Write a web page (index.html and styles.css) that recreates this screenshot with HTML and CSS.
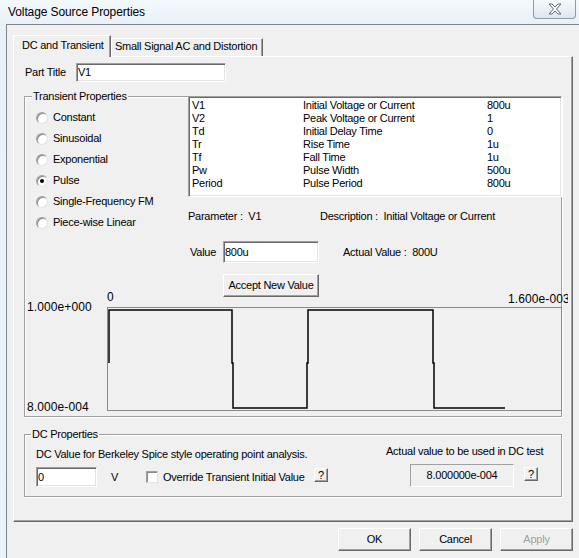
FILE: index.html
```html
<!DOCTYPE html>
<html lang="en">
<head>
    <meta charset="UTF-8">
    <meta name="viewport" content="width=device-width, initial-scale=1.0">
    <title>Voltage Source Properties</title>
    <link rel="stylesheet" href="styles.css">
</head>
<body>
    <!-- window caption -->
    <div class="titlebar">
        <span class="title">Voltage Source Properties</span>
        <div class="close-btn">
            <svg width="14" height="12" viewBox="0 0 14 12">
                <polygon points="1,1 4,1 7,4 10,1 13,1 8.5,6 13,11 10,11 7,8 4,11 1,11 5.5,6" fill="#fbfcfd" stroke="#5d6874" stroke-width="1" stroke-linejoin="round"/>
            </svg>
        </div>
    </div>

    <div class="client">
        <div class="tabs">
            <div class="tab tab-active">DC and Transient</div>
            <div class="tab tab-other">Small Signal AC and Distortion</div>
        </div>

        <div class="panel">
            <div class="part-row">
                <span class="part-label">Part Title</span>
                <div class="textbox part-input">V1</div>
            </div>

            <!-- transient group -->
            <div class="group transient">
                <span class="legend">Transient Properties</span>
                <div class="transient-top">
                    <div class="radios">
                        <div class="radio-row"><span class="radio"></span>Constant</div>
                        <div class="radio-row"><span class="radio"></span>Sinusoidal</div>
                        <div class="radio-row"><span class="radio"></span>Exponential</div>
                        <div class="radio-row"><span class="radio"><span class="dot"></span></span>Pulse</div>
                        <div class="radio-row"><span class="radio"></span>Single-Frequency FM</div>
                        <div class="radio-row"><span class="radio"></span>Piece-wise Linear</div>
                    </div>

                    <div class="params">
                        <div class="listbox">
                            <div class="list-row"><span class="c-name">V1</span><span class="c-desc">Initial Voltage or Current</span><span>800u</span></div>
                            <div class="list-row"><span class="c-name">V2</span><span class="c-desc">Peak Voltage or Current</span><span>1</span></div>
                            <div class="list-row"><span class="c-name">Td</span><span class="c-desc">Initial Delay Time</span><span>0</span></div>
                            <div class="list-row"><span class="c-name">Tr</span><span class="c-desc">Rise Time</span><span>1u</span></div>
                            <div class="list-row"><span class="c-name">Tf</span><span class="c-desc">Fall Time</span><span>1u</span></div>
                            <div class="list-row"><span class="c-name">Pw</span><span class="c-desc">Pulse Width</span><span>500u</span></div>
                            <div class="list-row"><span class="c-name">Period</span><span class="c-desc">Pulse Period</span><span>800u</span></div>
                        </div>
                        <div class="param-info">
                            <span class="info-param">Parameter :&nbsp; V1</span>
                            <span>Description :&nbsp; Initial Voltage or Current</span>
                        </div>
                        <div class="value-row">
                            <span class="value-label">Value</span>
                            <div class="textbox value-input">800u</div>
                            <span class="actual">Actual Value :&nbsp; 800U</span>
                        </div>
                        <div class="btn accept-btn">Accept New Value</div>
                    </div>
                </div>

                <!-- pulse preview -->
                <div class="graph">
                    <span class="axis ax-x0">0</span>
                    <span class="axis ax-x1">1.600e-003</span>
                    <span class="axis ax-y1">1.000e+000</span>
                    <span class="axis ax-y0">8.000e-004</span>
                    <div class="plot">
                        <svg width="453" height="102" viewBox="0 0 453 102">
                            <polyline points="1,55 1,2 124,2 124,55 125,55 125,100 199,100 199,55 200,55 200,2 325,2 325,55 326,55 326,100 397,100" fill="none" stroke="#000" stroke-width="1.5"/>
                        </svg>
                    </div>
                </div>
            </div>

            <!-- dc group -->
            <div class="group dc">
                <span class="legend">DC Properties</span>
                <div class="dc-left">
                    <div>DC Value for Berkeley Spice style operating point analysis.</div>
                    <div class="dc-row">
                        <div class="textbox dc-input">0</div>
                        <span class="unit">V</span>
                        <span class="checkbox"></span>
                        <span class="check-label">Override Transient Initial Value</span>
                        <span class="help">?</span>
                    </div>
                </div>
                <div class="dc-right">
                    <div>Actual value to be used in DC test</div>
                    <div class="dc-actual-row">
                        <div class="readout">8.000000e-004</div>
                        <span class="help help-right">?</span>
                    </div>
                </div>
            </div>
        </div>

        <div class="buttons">
            <div class="btn dlg-btn">OK</div>
            <div class="btn dlg-btn">Cancel</div>
            <div class="btn dlg-btn disabled">Apply</div>
        </div>
    </div>
</body>
</html>
```

FILE: styles.css
```css
* {
    box-sizing: border-box;
}

body {
    margin: 0;
    width: 579px;
    height: 558px;
    overflow: hidden;
    font-family: "Liberation Sans", Arial, sans-serif;
    font-size: 11px;
    line-height: 13px;
    letter-spacing: -0.25px;
    color: #000;
    background: linear-gradient(to bottom, #f3f8fb 0, #e9f1f7 24px, #e7f5f8 100%); /* glass frame */
}

.titlebar {
    display: flex;
    align-items: flex-start;
    height: 24px;
}

.title {
    padding: 5px 0 0 8px;
    font-size: 12px;
    line-height: 14px;
    letter-spacing: -0.1px;
}

.close-btn {
    margin-left: auto;
    margin-right: 3px;
    width: 43px;
    height: 19px;
    border: 1px solid #8e9aa6;
    border-top: none;
    border-radius: 0 0 4px 4px;
    background: linear-gradient(#f6f9fb, #dfe7ee);
    display: flex;
    align-items: center;
    justify-content: center;
}

.client {
    margin-left: 6px;
    height: 534px;
    border-left: 1px solid #7d868f;
    border-top: 1px solid #7d868f;
    background: #f0f0f0;
    padding: 10px 0 0 6px;
}

/* tabs */
.tabs {
    display: flex;
    height: 21px;
}

.tab {
    border-top: 1px solid #fff;
    border-left: 1px solid #fff;
    border-right: 1px solid #696969;
    box-shadow: inset -1px 0 #a0a0a0;
    white-space: nowrap;
}

.tab-active {
    position: relative;
    z-index: 1;
    width: 98px;
    height: 22px;
    margin-bottom: -1px;
    padding: 3px 0 0 8px;
    background: #f0f0f0;
}

.tab-other {
    align-self: flex-end;
    width: 152px;
    height: 18px;
    padding: 1px 0 0 3px;
}

.panel {
    width: 560px;
    height: 466px;
    border: 1px solid;
    border-color: #fff #696969 #696969 #fff;
    box-shadow: inset -1px -1px #a0a0a0;
    padding: 6px 0 0 10px;
}

.part-row {
    display: flex;
    align-items: center;
    height: 19px;
    margin-left: 1px;
}

.part-label {
    width: 51px;
}

.textbox {
    display: flex;
    align-items: center;
    padding-left: 1px;
    background: #fff;
    border: 1px solid;
    border-color: #a0a0a0 #fff #fff #a0a0a0;
    box-shadow: inset 1px 1px #696969, inset -1px -1px #e3e3e3;
}

.part-input {
    width: 150px;
    height: 19px;
}

/* group boxes */
.group {
    position: relative;
    width: 538px;
    border: 1px solid #a0a0a0;
    box-shadow: inset 1px 1px #fff, 1px 1px #fff;
}

.legend {
    position: absolute;
    top: -7px;
    left: 7px;
    padding: 0 1px;
    background: #f0f0f0;
    white-space: nowrap;
}

.transient {
    margin-top: 14px;
}

.transient-top {
    display: flex;
}

.radios {
    width: 163px;
    padding: 10px 0 0 11px;
}

.radio-row {
    display: flex;
    align-items: center;
    height: 21px;
    white-space: nowrap;
}

.radio {
    display: flex;
    align-items: center;
    justify-content: center;
    width: 12px;
    height: 12px;
    margin-right: 5px;
    border-radius: 50%;
    background: #fff;
    border: 1px solid;
    border-color: #a0a0a0 #e3e3e3 #e3e3e3 #a0a0a0;
    box-shadow: inset 1px 1px #8a8a8a;
}

.dot {
    width: 4px;
    height: 4px;
    border-radius: 50%;
    background: #000;
}

.params {
    flex: 1;
    margin-top: -1px;
    margin-right: -1px;
}

.listbox {
    height: 101px;
    padding: 2px 0 0 3px;
    background: #fff;
    border: 1px solid;
    border-color: #a0a0a0 #fff #fff #a0a0a0;
    box-shadow: inset 1px 1px #696969, inset -1px -1px #e3e3e3;
}

.list-row {
    display: flex;
    height: 13px;
    white-space: nowrap;
}

.c-name {
    width: 111px;
}

.c-desc {
    width: 184px;
}

.param-info {
    display: flex;
    margin-top: 13px;
    white-space: nowrap;
}

.info-param {
    width: 132px;
}

.value-row {
    display: flex;
    align-items: center;
    height: 22px;
    margin-top: 18px;
    white-space: nowrap;
}

.value-label {
    width: 35px;
    padding-left: 2px;
}

.value-input {
    width: 96px;
    height: 22px;
}

.actual {
    margin-left: 24px;
}

.btn {
    display: flex;
    align-items: center;
    justify-content: center;
    background: #f0f0f0;
    border: 1px solid;
    border-color: #fff #696969 #696969 #fff;
    box-shadow: inset -1px -1px #a0a0a0;
    white-space: nowrap;
}

.accept-btn {
    width: 96px;
    height: 23px;
    margin: 11px 0 0 35px;
}

/* preview canvas */
.graph {
    position: relative;
    height: 126px;
    margin-top: -7px;
}

.axis {
    position: absolute;
    font-size: 12px;
    line-height: 13px;
    letter-spacing: 0.1px;
    white-space: nowrap;
}

.ax-x0 { left: 82px; top: 1px; }
.ax-x1 { left: 483px; top: 3px; width: 60px; overflow: hidden; }
.ax-y1 { left: 2px; top: 11px; }
.ax-y0 { left: 2px; top: 111px; }

.plot {
    position: absolute;
    left: 82px;
    top: 17px;
    width: 455px;
    height: 104px;
    border: 1px solid #8a8a8a;
}

.plot svg {
    display: block;
}

/* dc group */
.dc {
    display: flex;
    height: 63px;
    margin-top: 17px;
}

.dc .legend {
    left: 6px;
}

.dc-left {
    width: 361px;
    padding: 13px 0 0 11px;
    white-space: nowrap;
}

.dc-row {
    display: flex;
    align-items: center;
    height: 20px;
    margin-top: 6px;
}

.dc-input {
    width: 61px;
    height: 20px;
}

.unit {
    width: 7px;
    margin-left: 14px;
}

.checkbox {
    width: 12px;
    height: 12px;
    margin-left: 28px;
    background: #fff;
    border: 1px solid;
    border-color: #a0a0a0 #e3e3e3 #e3e3e3 #a0a0a0;
    box-shadow: inset 1px 1px #8a8a8a;
}

.check-label {
    width: 146px;
    margin-left: 5px;
}

.help {
    display: flex;
    align-items: center;
    justify-content: center;
    align-self: flex-start;
    width: 14px;
    height: 14px;
    margin: 1px 0 0 5px;
    border: 1px solid;
    border-color: #fff #696969 #696969 #fff;
    box-shadow: inset -1px -1px #a0a0a0;
    font-size: 11px;
    line-height: 11px;
}

.dc-right {
    padding-top: 10px;
    white-space: nowrap;
}

.dc-actual-row {
    display: flex;
    margin: 6px 0 0 24px;
}

.readout {
    display: flex;
    align-items: center;
    justify-content: center;
    width: 104px;
    height: 23px;
    border: 1px solid;
    border-color: #a0a0a0 #fff #fff #a0a0a0;
}

.help-right {
    margin: 3px 0 0 10px;
}

/* dialog buttons */
.buttons {
    display: flex;
    justify-content: flex-end;
    gap: 8px;
    width: 560px;
    margin-top: 6px;
}

.dlg-btn {
    width: 73px;
    height: 23px;
}

.disabled {
    color: #a0a0a0;
}
```
